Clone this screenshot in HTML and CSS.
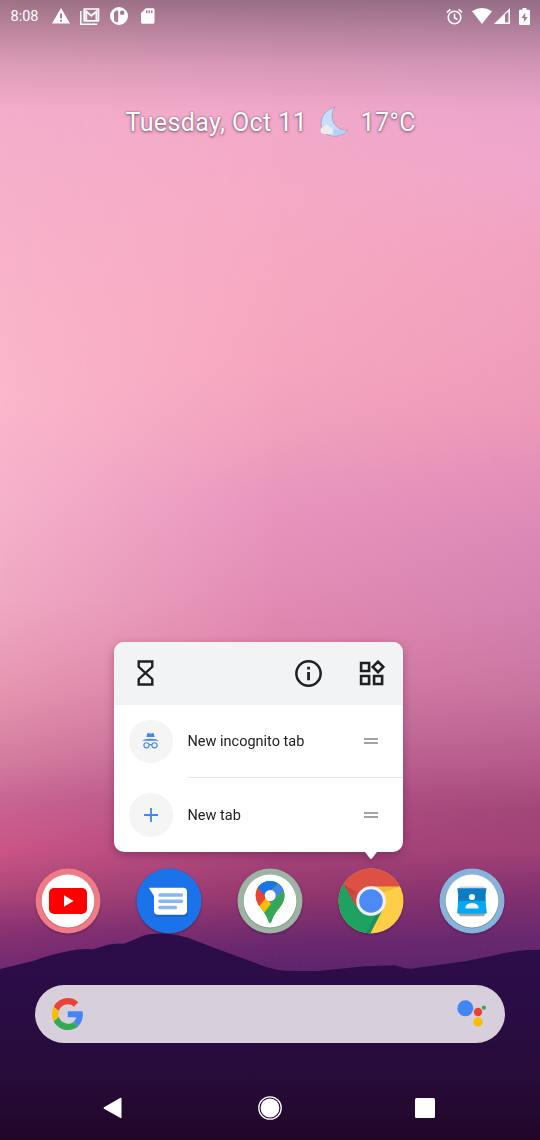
FILE: index.html
```html
<!DOCTYPE html>
<html lang="en">
<head>
<meta charset="utf-8">
<title>Home screen</title>
<link rel="stylesheet" href="styles.css">
</head>
<body>
<main class="screen">
  <div class="wallpaper">
    <div class="sky sky-left"></div>
    <div class="sky sky-middle"></div>
    <div class="sky sky-right"></div>
    <svg class="hills" viewBox="0 0 540 240">
      <defs><linearGradient id="hill" x1="0" y1="0" x2="0" y2="1"><stop offset="0" stop-color="#2d0d4a"/><stop offset=".4" stop-color="#2a0c43"/><stop offset=".72" stop-color="#270b38"/><stop offset="1" stop-color="#210628"/></linearGradient></defs>
      <path fill="url(#hill)" d="M0 69 34 60.7 Q52 54 69 51 Q80 48 93 49.3 L108 44.7 Q117 43 124 43.7 L138 38 Q146 34 152 34 Q160 33 167 33.7 Q178 34.5 188 37.7 L220 50 255 62.7 Q272 70 286 70.7 Q302 71.3 317 71 L365 66.3 Q380 66 394 65.3 L405 68 Q411 69.5 418 67.8 L465 61.3 496 55 Q512 51 527 50 L540 49.7V240H0Z"/>
    </svg>
    <div class="top-shade"></div>
  </div>

  <header class="status">
    <div class="status-left">
      <span class="clock">8:08</span>
      <svg class="s-warn" viewBox="0 0 18 16"><path fill="#fff" fill-rule="evenodd" d="M9 0 18 15.6H0ZM8 5.5v5h2v-5Zm0 6.3v2h2v-2Z"/></svg>
      <svg class="s-mail" viewBox="0 0 20 17"><path fill="none" stroke="#fff" stroke-width="1.5" d="M.8 3v13.2h16.4"/><path fill="none" stroke="#fff" stroke-width="1.700" stroke-linejoin="round" d="M4.200 1h14.300v11.800H4.200Z"/><path fill="none" stroke="#fff" stroke-width="2" d="M6.200 12V3.500l5.150 4.300 5.150-4.300V12" opacity=".95"/></svg>
      <svg class="s-round" viewBox="0 0 18 18"><path fill="#fff" fill-rule="evenodd" d="M9 0a9 9 0 1 1 0 18A9 9 0 0 1 9 0ZM8.200 3.400C5.500 3.200 4 4.700 4 6.400v7q1.500 1.800 4.200 1.900ZM12.200 3.500a2.300 2.300 0 1 0 0 4.600 2.300 2.300 0 0 0 0-4.600Z"/></svg>
      <svg class="s-card" viewBox="0 0 14 16"><path fill="#fff" fill-rule="evenodd" d="M5 0h7.500Q14 0 14 1.500v13q0 1.500-1.500 1.500h-11Q0 16 0 14.500V5Zm.2 2v3.200h1.500V2Zm2.600 0v3.200h1.500V2Zm2.600 0v3.200h1.500V2Z"/></svg>
    </div>
    <div class="status-right">
      <svg class="s-alarm" viewBox="0 0 18 18"><g fill="none" stroke="#fff" stroke-width="1.700"><circle cx="9" cy="10" r="6.6"/><path d="M9 6v4.300l3 1.900M1 4.600 4.700 1.500M17 4.600 13.300 1.500"/></g></svg>
      <svg class="s-wifi" viewBox="0 0 20 16"><path fill="#fff" d="M0 3.200Q10-3.200 20 3.200L10 16Z"/></svg>
      <svg class="s-cell" viewBox="0 0 16 16"><path fill="#fff" fill-rule="evenodd" d="M16 0v16H0ZM11 6.500v8h3.400V3.600Z"/></svg>
      <svg class="s-batt" viewBox="0 0 11 17"><path fill="#fff" fill-rule="evenodd" d="M3.500 0h4v1.700H10q1 0 1 1V16q0 1-1 1H1q-1 0-1-1V2.700q0-1 1-1h2.500ZM6.200 4.800 2.500 10h2.300v4.200L8.600 9H6.200Z"/></svg>
    </div>
  </header>

  <section class="glance">
    <span class="date">Tuesday, Oct 11</span>
    <svg class="moon" viewBox="0 0 29 32"><path fill="#c8dcfb" stroke="#8b81a1" stroke-opacity=".7" stroke-width=".7" d="M15 1Q1 5 1 18C2 27 9 31 17 30Q24 29 28 24.500C14 25 8 10 15 1Z"/><path fill="#b7cff6" d="M12 23 27 25Q22 30 14 29Z"/><path fill="#ededf0" d="M3.500 28a3.700 3.700 0 0 1 .4-7.300Q6 17.300 9 20.200q1 0 1.600 2 3 .2 2.600 3.200-.5 2.600-3 2.600Z"/></svg>
    <span class="temp">17°C</span>
  </section>

  <section class="popup">
    <div class="popup-card">
      <div class="shortcuts">
        <svg class="hourglass" viewBox="0 0 17 26"><path fill="none" stroke="#202124" stroke-width="2.400" d="M1.700 1.500h13.600v5.300L1.700 19.200v5.300h13.600v-5.300L1.700 6.800Z"/></svg>
        <svg class="info" viewBox="0 0 26 26"><circle cx="13" cy="13" r="11.7" fill="none" stroke="#202124" stroke-width="2.400"/><path fill="#202124" d="M11.700 6.500h2.700v2.600h-2.700zm0 5h2.700v8h-2.700z"/></svg>
        <svg class="widgets" viewBox="0 0 26 26"><g fill="none" stroke="#202124" stroke-width="2.600"><path d="M2.100 3h8v8h-8zM2.100 16h8v8h-8zM15.100 16h8v8h-8zM19 1.700l5.200 5.200-5.200 5.200-5.200-5.200Z"/></g></svg>
      </div>
      <div class="item">
        <span class="badge"><svg class="incog" viewBox="0 0 17 16"><path fill="#4285f4" d="M5.300.3 6.500 0q2 1.200 4 0l1.200.3.9 3.600H4.400ZM0 7.800Q2.500 5.700 8.500 5.700T17 7.800Z"/><g fill="none" stroke="#4285f4" stroke-width="1.100"><circle cx="4.500" cy="12.300" r="2.600"/><circle cx="12.500" cy="12.300" r="2.600"/><path d="M7 12q1.500-.8 3 0"/></g></svg></span>
        <div class="item-body"><span class="label">New incognito tab</span><span class="handle"></span></div>
      </div>
      <div class="item">
        <span class="badge"><svg class="plus" viewBox="0 0 14 14"><path stroke="#4285f4" stroke-width="1.800" d="M7 0v14M0 7h14"/></svg></span>
        <div class="item-body"><span class="label">New tab</span><span class="handle"></span></div>
      </div>
    </div>
    <svg class="arrow" viewBox="0 0 12 8"><path fill="#fff" d="M0 0h12L7.200 6.200Q6 7.700 4.800 6.200Z"/></svg>
  </section>

  <nav class="dock">
    <svg class="app" viewBox="0 0 66 66"><circle cx="33" cy="33" r="32.500" fill="#ee7b85"/><circle cx="33" cy="33.700" r="26.700" fill="#b9505f" opacity=".6"/><circle cx="33" cy="33" r="26.400" fill="#fff"/><rect x="14" y="20" width="38" height="26" rx="5" fill="#f00"/><path fill="#fff" d="m29 27.300 9.500 5.700-9.500 5.700Z"/></svg>
    <svg class="app" viewBox="0 0 66 66"><circle cx="33" cy="33" r="32.500" fill="#1a73e8"/><path fill="#1357b5" opacity=".55" d="M18 44h34v3q0 2-5 2H22q-4 0-4-5Z"/><path fill="#fff" d="M12.800 19.800H47q4 0 4 4v19q0 4-4 4H22q-4 0-4-4V28Z"/><g fill="#8ab4f8"><rect x="22.200" y="25.300" width="25" height="3.500" rx="1.700"/><rect x="22.200" y="31.500" width="25" height="3.500" rx="1.700"/><rect x="22.200" y="37.700" width="19" height="3.500" rx="1.700"/></g></svg>
    <svg class="app" viewBox="0 0 66 66"><defs><clipPath id="pin"><path d="M33 13C24 13 18.700 20 18.700 27.500 18.700 38 28 42 31 52q.7 3 2 3t2-3C38 42 47.500 38 47.500 27.500 47.500 20 42 13 33 13Z"/></clipPath></defs><circle cx="33" cy="33" r="32.500" fill="#9db3a3"/><circle cx="33" cy="33.700" r="26.700" fill="#66796d" opacity=".6"/><circle cx="33" cy="33" r="26.400" fill="#fff"/><g clip-path="url(#pin)"><path fill="#34a853" d="M10 8h46v52H10z"/><path fill="#fbbc04" d="M15 39 33 18 41 28 24 49Z"/><path fill="#ea4335" d="M10 12 22 18 33 25 19 42 10 38Z"/><path fill="#1a73e8" d="M17 10h28L29 28.500 21 20Z"/><path fill="#4285f4" d="M43.500 14 55 18 50 22.500 34 36 29 28.500Z"/><path fill="#34a853" d="M50 17 34 36 23 50 34 60 56 34Z"/></g><circle cx="33.200" cy="27.500" r="5.500" fill="#fff"/></svg>
    <svg class="app" viewBox="0 0 66 66"><defs><clipPath id="disc"><circle cx="33" cy="33" r="32.500"/></clipPath><linearGradient id="sh" x1="0" y1="0" x2="1" y2="1"><stop offset="0" stop-color="#000" stop-opacity=".2"/><stop offset="1" stop-color="#000" stop-opacity="0"/></linearGradient></defs><g clip-path="url(#disc)"><path fill="#ffcd46" d="M0 0h66v66H0z"/><path fill="#1da261" d="M0 0H20L33 33 45 41 31.500 67H0Z"/><path fill="#dd5144" d="M5.500 16.500 12-4H66V18.600H33L19 40Z"/><path fill="url(#sh)" d="M6 16.500 19 40 21 26Z"/><path fill="#000" opacity=".1" d="m38 46 6-4-12.500 25H27Z"/><path fill="#a56b20" opacity=".18" d="M33 18.600h29L44 25Z"/></g><circle cx="33" cy="33" r="14.800" fill="#f1f1f1"/><circle cx="33" cy="33" r="11.800" fill="#4c8bf5"/></svg>
    <svg class="app" viewBox="0 0 66 66"><circle cx="33" cy="33" r="32.500" fill="#88b2da"/><circle cx="33" cy="33.700" r="26.700" fill="#53739c" opacity=".6"/><circle cx="33" cy="33" r="26.400" fill="#fff"/><path fill="#d2d2d2" d="M21 18.500h24l2 3H19Z"/><path fill="#a5a5a5" d="M19 45h28l-2 3.200H21Z"/><path fill="#0b7dc2" d="M18.300 20.300h29.200q-1.500 6-.8 12.700H19q.8-6.700-.7-12.700Z"/><path fill="#06a8f4" d="M19 33h27.700q.2 6 1.300 12.300-15 1-30 0Q19 39 19 33Z"/><circle cx="33" cy="29" r="3.100" fill="#f1f1f1"/><path fill="#f1f1f1" d="M26.500 40.500v-1.800q1.500-3.700 6.500-3.700t6.500 3.700v1.800Z"/></svg>
  </nav>

  <section class="search">
    <svg class="g" viewBox="0 0 48 48" preserveAspectRatio="none"><path fill="#ea4335" d="M24 9.500c3.540 0 6.710 1.220 9.210 3.600l6.850-6.850C35.900 2.380 30.470 0 24 0 14.620 0 6.510 5.380 2.560 13.220l7.980 6.190C12.430 13.720 17.740 9.500 24 9.500z"/><path fill="#4285f4" d="M46.980 24.550c0-1.570-.15-3.090-.38-4.550H24v9.020h12.940c-.58 2.960-2.260 5.480-4.780 7.180l7.730 6c4.510-4.180 7.090-10.360 7.090-17.650z"/><path fill="#fbbc05" d="M10.530 28.590c-.48-1.450-.76-2.990-.76-4.590s.27-3.140.76-4.590l-7.980-6.190C.92 16.460 0 20.120 0 24c0 3.880.92 7.540 2.560 10.780l7.970-6.190z"/><path fill="#34a853" d="M24 48c6.480 0 11.930-2.130 15.890-5.810l-7.730-6c-2.150 1.450-4.920 2.300-8.160 2.300-6.260 0-11.570-4.220-13.470-9.910l-7.980 6.190C6.510 42.620 14.620 48 24 48z"/></svg>
    <svg class="assistant" viewBox="0 0 30 28"><circle cx="8.300" cy="8.300" r="8" fill="#4285f4"/><circle cx="21" cy="12" r="4.200" fill="#ea4335"/><circle cx="26.800" cy="7.700" r="2.100" fill="#34a853"/><circle cx="21" cy="22" r="4.700" fill="#fbbc05"/></svg>
  </section>

  <footer class="nav">
    <svg class="n-back" viewBox="0 0 20 22"><path fill="#fff" d="M1 10.200 17.500.8q1-.5 1 .6v19.200q0 1-1 .500L1 11.800q-1-.8 0-1.600Z"/></svg>
    <svg class="n-home" viewBox="0 0 24 24"><circle cx="12" cy="12" r="11.200" fill="none" stroke="#fff" stroke-width="1.300"/><circle cx="12" cy="12" r="9.400" fill="#fff"/></svg>
    <svg class="n-recent" viewBox="0 0 20 20"><rect width="20" height="20" rx="1.500" fill="#fff"/></svg>
  </footer>
</main>
</body>
</html>
```
FILE: styles.css
```css
* { box-sizing: border-box; }
body { margin: 0; font-family: Roboto, "Noto Sans", sans-serif; }
svg { display: block; flex: none; }
.screen { position: relative; width: 540px; height: 1140px; overflow: hidden; display: flex; flex-direction: column; isolation: isolate; }
.screen > * { flex: none; }
.wallpaper { position: absolute; inset: 0; z-index: -1; }
.sky, .top-shade, .hills { position: absolute; inset: 0; }
.sky-left { background: linear-gradient(to bottom, #f3aac8 0, #f3aecb 120px, #f7b1ca 220px, #fab5ca 320px, #fbb7cc 400px, #f6b2cb 500px, #f0a9c3 600px, #e795b1 690px, #d47d9f 760px, #c96593 800px, #cb5585 850px, #af487b 890px, #8a3273 930px, #732a70 970px); }
.sky-middle { background: linear-gradient(to bottom, #e8a3c5 0, #f2a9ca 120px, #f6aac5 200px, #f7a8c1 300px, #f6a6bf 370px, #f09fbd 440px, #e995be 500px, #e48fb7 570px, #df85ac 650px, #c8709d 730px, #b45487 790px, #a9457b 850px, #94386f 895px, #6e296f 940px, #5d256d 970px); mask-image: linear-gradient(to right, transparent, #000 50%); }
.sky-right { background: linear-gradient(to bottom, #e1a0c3 0, #eda6cb 130px, #f1a7ca 180px, #f2a1be 260px, #f09ebc 340px, #ee99b9 410px, #e590b8 470px, #db88b6 540px, #d481b0 610px, #c9749f 690px, #b65c8c 760px, #a24678 810px, #a04177 850px, #81306f 895px, #67286f 940px, #5e266d 970px); mask-image: linear-gradient(to right, transparent 50%, #000); }
.hills { top: auto; width: 540px; height: 240px; }
.top-shade { background: linear-gradient(to bottom, rgba(40,35,45,.42) 0, rgba(50,40,50,.28) 30px, rgba(60,45,55,.12) 65px, transparent 110px); }

.status { height: 32px; padding: 0 10px 0 10.500px; display: flex; justify-content: space-between; align-items: center; color: #fff; }
.status-left, .status-right { display: flex; align-items: center; }
.clock { font-size: 14.500px; line-height: 32px; width: 41.500px; padding-top: 1px; }
.s-warn { width: 18px; height: 16px; margin-right: 10px; }
.s-mail { width: 20px; height: 17px; margin-right: 10px; }
.s-round { width: 18px; height: 18px; margin-right: 13px; }
.s-card { width: 13.500px; height: 16px; }
.s-alarm { width: 17px; height: 17px; margin-right: 9px; }
.s-wifi { width: 20px; height: 16px; margin-right: 2px; }
.s-cell { width: 16px; height: 16px; margin-right: 9px; }
.s-batt { width: 11px; height: 17px; }

.glance { height: 60px; margin-top: 60px; padding-left: 125.500px; display: flex; align-items: center; color: #fff; font-size: 25px; line-height: 30px; text-shadow: 0 1px 3px rgba(70,30,60,.65), 0 0 2px rgba(70,30,60,.4); }
.date { width: 194.500px; padding-top: 2px; letter-spacing: .4px; white-space: nowrap; }
.moon { width: 29px; height: 32px; margin-right: 11.500px; }
.temp { padding-top: 2px; letter-spacing: .4px; white-space: nowrap; }

.popup { margin: 489.500px 0 0 114px; width: 288.500px; height: 218px; filter: drop-shadow(0 3px 5px rgba(40,0,40,.3)); }
.popup-card { height: 210px; border-radius: 10px; overflow: hidden; background: #fff; }
.shortcuts { height: 63px; background: #f1f3f4; display: flex; align-items: center; padding: 0 18px 0 23px; }
.hourglass { width: 17px; height: 26px; }
.info { width: 27px; height: 27px; margin-left: auto; }
.widgets { width: 26px; height: 26px; margin-left: 37px; }
.item { height: 73.500px; display: flex; align-items: center; padding-left: 15px; }
.badge { width: 43.500px; height: 43.500px; border-radius: 50%; background: #f5f5f5; display: grid; place-items: center; }
.incog { width: 17px; height: 16px; }
.plus { width: 14px; height: 14px; }
.item-body { flex: 1; height: 73.500px; margin-left: 15px; padding-right: 25px; display: flex; align-items: center; justify-content: space-between; border-bottom: 1px solid #e6e6e6; }
.item:last-child .item-body { border-bottom: 0; }
.label { font-size: 14.500px; line-height: 20px; color: #202124; padding-top: 3px; }
.handle { width: 14px; height: 6px; border: solid #a2a2a2; border-width: 2px 0; }
.arrow { width: 12px; height: 8px; margin-left: 251px; }

.dock { height: 66px; margin-top: 8px; padding: 0 35px; display: flex; justify-content: space-between; }
.app { width: 66px; height: 66px; filter: drop-shadow(0 1px 1px rgba(30,0,40,.4)); }

.search { height: 58px; margin: 51.500px 35.500px 0 35px; padding: 0 18px 0 17px; border-radius: 29px; background: #d7d0dc; display: flex; align-items: center; justify-content: space-between; }
.g { width: 31.500px; height: 32px; }
.assistant { width: 30px; height: 28px; }

.nav { height: 65px; margin-top: 32px; padding: 1px 105px 0 102.500px; display: flex; align-items: center; justify-content: space-between; }
.n-back { width: 20px; height: 22px; }
.n-home { width: 24px; height: 24px; margin-left: 2px; }
.n-recent { width: 20px; height: 20px; }
```
